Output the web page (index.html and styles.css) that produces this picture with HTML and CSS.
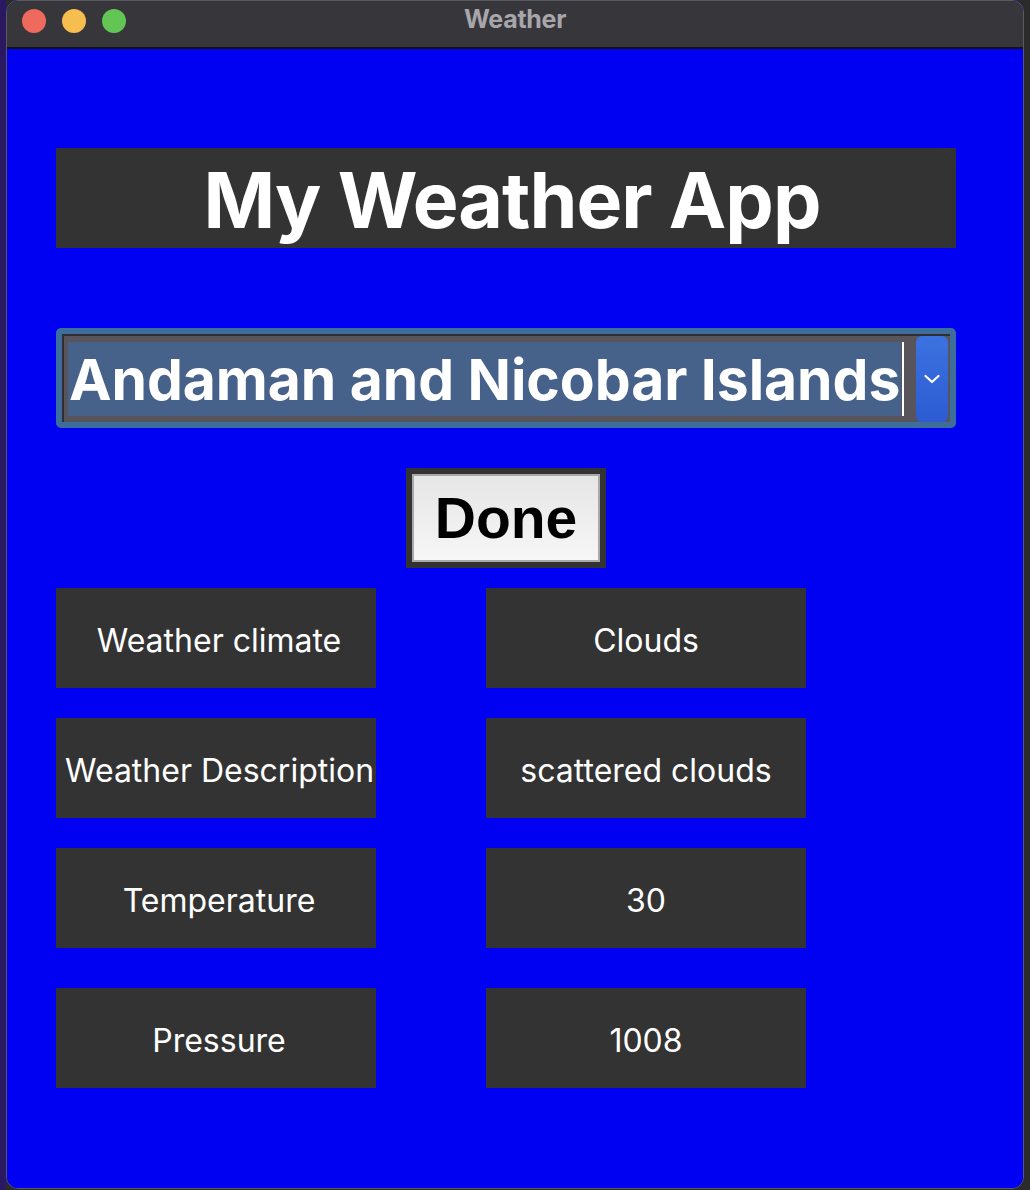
FILE: index.html
```html
<!DOCTYPE html>
<html>
<head>
<meta charset="utf-8">
<link rel="stylesheet" href="styles.css">
</head>
<body>
<div class="window">
  <div class="titlebar">
    <div class="lights">
      <span class="light red"></span>
      <span class="light yellow"></span>
      <span class="light green"></span>
    </div>
    <div class="wtitle">Weather</div>
  </div>
  <div class="content">
    <div class="app-title">My Weather App</div>
    <div class="combo">
      <div class="combo-frame">
        <div class="combo-field">
          <span class="combo-text">Andaman and Nicobar Islands</span>
          <span class="caret"></span>
        </div>
        <div class="combo-btn">
          <svg width="18" height="12" viewBox="0 0 18 12"><path d="M2.5 3 L9 9 L15.5 3" fill="none" stroke="#fff" stroke-width="2.2" stroke-linecap="round" stroke-linejoin="round"/></svg>
        </div>
      </div>
    </div>
    <div class="done-wrap">
      <div class="done"><span class="done-inner">Done</span></div>
    </div>
    <div class="grid">
      <div class="cell">Weather climate</div>
      <div class="cell">Clouds</div>
      <div class="cell tight">Weather Description</div>
      <div class="cell">scattered clouds</div>
      <div class="cell">Temperature</div>
      <div class="cell">30</div>
      <div class="cell last">Pressure</div>
      <div class="cell last">1008</div>
    </div>
  </div>
</div>
</body>
</html>
```

FILE: styles.css
```css
html, body {
  margin: 0;
  padding: 0;
}
body {
  width: 1030px;
  height: 1190px;
  background: linear-gradient(90deg, #2a1860 0, #2a1860 6px, #2b2b2b 6px);
  overflow: hidden;
  font-family: Inter, "Noto Sans", sans-serif;
}
.window {
  margin-left: 6px;
  width: 1016px;
  height: 1187px;
  border: 1px solid #5a5a62;
  border-radius: 12px;
  overflow: hidden;
  background: #0000f2;
  display: flex;
  flex-direction: column;
}
.titlebar {
  height: 46px;
  flex: none;
  background: #37363b;
  border-bottom: 2px solid #121214;
  display: flex;
  align-items: center;
  position: relative;
}
.lights {
  display: flex;
  gap: 16px;
  padding-left: 15px;
  margin-top: -7px;
}
.light {
  width: 24px;
  height: 24px;
  border-radius: 50%;
  display: block;
}
.red { background: #ee6a5f; }
.yellow { background: #f5be4f; }
.green { background: #62c554; }
.wtitle {
  position: absolute;
  left: 0;
  right: 0;
  top: 3px;
  text-align: center;
  color: #a7a6ab;
  font-weight: 700;
  font-size: 25px;
  letter-spacing: -0.3px;
}
.content {
  flex: 1;
  background: #0000f2;
  padding: 99px 0 0 49px;
  display: flex;
  flex-direction: column;
}
.app-title {
  width: 900px;
  height: 100px;
  background: #333333;
  color: #fff;
  font-weight: 700;
  font-size: 77px;
  display: flex;
  align-items: center;
  justify-content: center;
  padding-left: 12px;
  padding-top: 4px;
  box-sizing: border-box;
  letter-spacing: -1px;
}
.combo {
  margin-top: 80px;
  width: 900px;
  height: 100px;
  box-sizing: border-box;
  background: #3c6d9b;
  border-radius: 5px;
  padding: 6px;
}
.combo-frame {
  height: 100%;
  box-sizing: border-box;
  border-top: 2px solid #2d2d33;
  border-left: 2px solid #2d2d33;
  background: #58545c;
  display: flex;
  align-items: stretch;
  padding: 0 2px 0 4px;
}
.combo-field {
  display: flex;
  align-items: stretch;
  margin: 6px 0;
  flex: 1;
}
.combo-text {
  width: 832px;
  background: #46628a;
  color: #fff;
  font-weight: 700;
  font-size: 57px;
  display: flex;
  align-items: center;
  white-space: nowrap;
  overflow: hidden;
  letter-spacing: -0.05px;
  padding-left: 1px;
}
.caret {
  width: 2px;
  background: #fff;
  margin-left: 1px;
}
.combo-btn {
  width: 32px;
  margin: 0;
  border-radius: 6px;
  background: linear-gradient(180deg, #3c72e0, #2c5bd2);
  display: flex;
  align-items: center;
  justify-content: center;
}
.done-wrap {
  width: 900px;
  display: flex;
  justify-content: center;
  margin-top: 40px;
}
.done {
  width: 200px;
  height: 100px;
  box-sizing: border-box;
  border: 6px solid #333;
  background: #333;
  display: flex;
}
.done-inner {
  flex: 1;
  border: 2px solid #a9a9a9;
  background: linear-gradient(180deg, #e6e6e6, #f6f6f6);
  font-family: "Liberation Sans", Arial, sans-serif;
  font-weight: 700;
  font-size: 57px;
  color: #000;
  display: flex;
  align-items: center;
  justify-content: center;
}
.grid {
  margin-top: 20px;
  display: grid;
  grid-template-columns: 320px 320px;
  grid-template-rows: 100px 100px 100px 110px;
  column-gap: 110px;
  row-gap: 30px;
}
.cell {
  background: #333333;
  color: #fff;
  font-size: 32px;
  height: 100px;
  box-sizing: border-box;
  padding-top: 4px;
  display: flex;
  align-items: center;
  justify-content: center;
  white-space: nowrap;
  overflow: hidden;
  letter-spacing: 0;
}
.cell:nth-child(odd) {
  padding-left: 6px;
}
.cell.tight {
  justify-content: flex-start;
  padding-left: 9px;
}
.cell.last {
  align-self: end;
}
```
